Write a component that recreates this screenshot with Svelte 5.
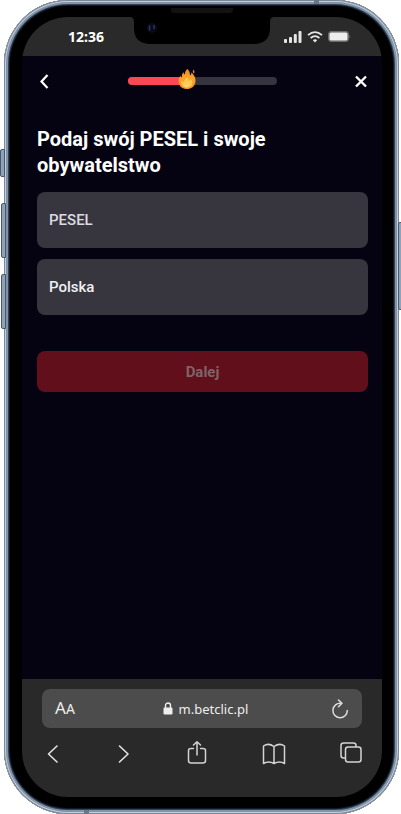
<script>
  let pesel = $state('');
  let country = $state('Polska');
  const progress = 40;
</script>

<svelte:head>
  <title>Betclic</title>
</svelte:head>

<div class="stage">
  <div class="phone">
    <span class="side mute"></span>
    <span class="side up"></span>
    <span class="side down"></span>
    <span class="side power"></span>
    <span class="speaker"></span>
    <span class="antenna top-right"></span>
    <span class="antenna bottom-left"></span>

    <div class="screen">
      <div class="status">
        <span class="time">12:36</span>
        <svg class="notch" width="144" height="28" viewBox="0 0 144 28">
          <path d="M0 0H144Q140 0 140 5V11Q140 27 123 27H21Q4 27 4 11V5Q4 0 0 0Z" fill="#000" />
          <circle cx="22" cy="11" r="5" fill="#0b0b14" />
          <path d="M19.500 9v4M24 8.500v3" stroke="#2b3270" stroke-width="1.500" stroke-linecap="round" />
        </svg>
        <div class="signals">
          <svg width="18" height="12" viewBox="0 0 18 12" fill="#e6e6e6">
            <rect x="0" y="8" width="3" height="4" rx="1" />
            <rect x="5" y="6" width="3" height="6" rx="1" />
            <rect x="9.800" y="3" width="3" height="9" rx="1" />
            <rect x="14.500" y="0" width="3" height="12" rx="1" />
          </svg>
          <svg width="16" height="12" viewBox="0 0 16 12" fill="none" stroke="#e6e6e6" stroke-width="1.800">
            <path d="M1 4.200Q8-2 15 4.200" />
            <path d="M3.600 7Q8 3.200 12.400 7" />
            <path d="M5.800 9.300Q8 7.300 10.200 9.300L8 11.600Z" fill="#e6e6e6" stroke="none" />
          </svg>
          <svg width="23" height="11" viewBox="0 0 23 11">
            <rect x="0.500" y="0.500" width="20" height="10" rx="2.500" fill="#5c5c5c" stroke="#6a6a6a" />
            <rect x="1.500" y="1.500" width="18" height="8" rx="1.500" fill="#ededed" />
            <path d="M21.500 3.500q1.500 2 0 4z" fill="#777" />
          </svg>
        </div>
      </div>

      <main>
        <header>
          <button class="icon" aria-label="Wstecz">
            <svg width="14" height="16" viewBox="0 0 14 16" fill="none" stroke="#fff" stroke-width="2.200">
              <path d="M10.500 2L4.500 8.500L10.500 15" />
            </svg>
          </button>
          <div class="progress" role="progressbar" aria-valuenow={progress} aria-valuemin="0" aria-valuemax="100" aria-label="Postęp">
            <div class="fill" style="width: {progress}%"></div>
            <svg class="flame" style="left: {progress}%" width="18" height="22" viewBox="0 0 18 22">
              <defs>
                <linearGradient id="fire" x1="0" y1="0" x2="0" y2="1">
                  <stop offset="0" stop-color="#f08a1c" />
                  <stop offset="0.500" stop-color="#fba62b" />
                  <stop offset="1" stop-color="#f58a25" />
                </linearGradient>
              </defs>
              <path d="M9.500 1C11.500 3 12 5 12 7.500C13.300 6.800 13.500 5.500 13.300 4.300C16 7 18 10 17.400 14C16.700 18.500 13.300 21 9 21C4.500 21 1 18.500.6 14C.4 11.500 1.300 9.500 2.600 7.500C2.700 9 3 9.700 3.800 10.200C3.900 8 4 6 5.200 4C5.500 5.400 6 6 7 6.500C6.800 4.300 7.600 2.300 9.500 1Z" fill="url(#fire)" />
              <path d="M15.200 1.500C16.700 3 17 4.600 15.800 5.600C14.600 4.500 14.700 2.800 15.200 1.500Z" fill="#e88a1d" />
              <path d="M9.600 9C10.500 10.500 10.300 11.500 10.600 13C12 12.500 12.600 11.800 12.800 10.800C14.500 13 15 15.500 13.500 17.800C11.500 20.300 6.500 20.400 4.500 17.900C3.100 16 3 14.200 3.800 12.600C4.500 13.600 5 14 6 14.100C6 12 7.500 10.700 9.600 9Z" fill="#fec94f" />
              <path d="M9.500 14C11.500 15.500 11.800 17 10.800 18.300C9.500 19.600 7.200 19.400 6.300 18.200C5.600 17.200 5.800 16.500 6.200 15.900C6.900 16.600 7.500 16.600 8 16.400C9 15.800 9.300 15 9.500 14Z" fill="#fed469" />
            </svg>
          </div>
          <button class="icon" aria-label="Zamknij">
            <svg width="14" height="16" viewBox="0 0 14 16" fill="none" stroke="#fff" stroke-width="2.400">
              <path d="M2 3.500L12 13.500M12 3.500L2 13.500" />
            </svg>
          </button>
        </header>

        <form onsubmit={(e) => e.preventDefault()}>
          <h1>Podaj swój PESEL i swoje obywatelstwo</h1>
          <input class="field" type="text" placeholder="PESEL" aria-label="PESEL" bind:value={pesel} />
          <select class="field" aria-label="Obywatelstwo" bind:value={country}>
            <option>Polska</option>
          </select>
          <button class="submit" disabled={!pesel}>Dalej</button>
        </form>
      </main>

      <footer>
        <div class="address">
          <button class="reader" aria-label="Widok strony">A<small>A</small></button>
          <a class="url" href="https://m.betclic.pl">
            <svg width="10" height="13" viewBox="0 0 10 13">
              <path d="M2.500 6V3.500a2.500 2.500 0 0 1 5 0V6" fill="none" stroke="#eee" stroke-width="1.400" />
              <rect x="0.500" y="5.500" width="9" height="7" rx="1.300" fill="#eee" />
            </svg>
            m.betclic.pl
          </a>
          <button class="icon" aria-label="Odśwież">
            <svg width="18" height="20" viewBox="0 0 18 20" fill="none" stroke="#ddd" stroke-width="1.500" stroke-linecap="round" stroke-linejoin="round">
              <path d="M10 4.300A7.200 7.200 0 1 0 16.300 11.500" />
              <path d="M7.500 1L11 4.300L7.500 7.800" />
            </svg>
          </button>
        </div>
        <nav>
          <button class="icon" aria-label="Poprzednia strona">
            <svg width="18" height="24" viewBox="0 0 18 24" fill="none" stroke="#e4e4e4" stroke-width="1.600" stroke-linecap="round" stroke-linejoin="round">
              <path d="M13 5L4.500 13L13 21" />
            </svg>
          </button>
          <button class="icon" aria-label="Następna strona">
            <svg width="22" height="24" viewBox="0 0 22 24" fill="none" stroke="#e4e4e4" stroke-width="1.600" stroke-linecap="round" stroke-linejoin="round">
              <path d="M6.500 5L15 13L6.500 21" />
            </svg>
          </button>
          <button class="icon" aria-label="Udostępnij">
            <svg width="22" height="24" viewBox="0 0 22 24" fill="none" stroke="#d4d4d4" stroke-width="1.500" stroke-linecap="round" stroke-linejoin="round">
              <path d="M7.500 7.500H5Q2.500 7.500 2.500 9.500V19.500Q2.500 22 5 22H17Q19.500 22 19.500 19.500V9.500Q19.500 7.500 17 7.500H14.500" />
              <path d="M11 14V1M7.500 4L11 .8L14.500 4" />
            </svg>
          </button>
          <button class="icon wide" aria-label="Zakładki">
            <svg width="24" height="24" viewBox="0 0 24 24" fill="none" stroke="#d4d4d4" stroke-width="1.500" stroke-linejoin="round">
              <path d="M12 5.500Q6.500 1.500 1.500 5V22.500Q6.500 19.500 12 22.500Q17.500 19.500 22.500 22.500V5Q17.500 1.500 12 5.500ZM12 5.500V22.500" />
            </svg>
          </button>
          <button class="icon" aria-label="Karty">
            <svg width="22" height="24" viewBox="0 0 22 24" fill="none" stroke="#d4d4d4" stroke-width="1.500" stroke-linejoin="round">
              <rect x="5.500" y="6" width="15.500" height="15" rx="2.500" />
              <path d="M5.500 17H3.500Q1 17 1 14.500V4.500Q1 2 3.500 2H13.500Q16 2 16 4.500V6" />
            </svg>
          </button>
        </nav>
      </footer>
    </div>
  </div>
</div>

<style>
  :global(body) {
    margin: 0;
    background: #fff;
  }

  * {
    box-sizing: border-box;
  }

  button,
  input,
  select {
    margin: 0;
    border: 0;
    font: inherit;
    color: inherit;
  }

  svg {
    display: block;
  }

  .stage {
    padding: 0 2px 0 4px;
    overflow: hidden;
    font-family: Roboto, 'Liberation Sans', sans-serif;
  }

  .phone {
    position: relative;
    display: flex;
    min-height: 100vh;
    padding: 17px 17px 17px 18px;
    border-radius: 64px;
    background: #000;
    box-shadow:
      inset 0 0 0 1px #7c8794,
      inset 0 0 0 2px #c3cedb,
      inset 0 0 0 4px #8093a9,
      inset 0 0 0 5px #33445a,
      inset 0 0 0 6px #101823;
  }

  .screen {
    position: relative;
    display: flex;
    flex: 1;
    flex-direction: column;
    overflow: hidden;
    border-radius: 46px;
    background: #050312;
  }

  .side {
    position: absolute;
    left: -4px;
    width: 5px;
    border: 1px solid #49586b;
    border-radius: 2px 0 0 2px;
    background: #8fa2b8;
  }

  .mute {
    top: 149px;
    height: 28px;
  }

  .up {
    top: 203px;
    left: -3px;
    height: 55px;
  }

  .down {
    top: 274px;
    left: -3px;
    height: 55px;
  }

  .power {
    top: 222px;
    right: -3px;
    left: auto;
    width: 4px;
    height: 88px;
  }

  .speaker {
    position: absolute;
    top: 8px;
    left: 50%;
    width: 62px;
    height: 5px;
    margin-left: -31px;
    border-radius: 0 0 3px 3px;
    background: #121212;
  }

  .antenna {
    position: absolute;
    width: 5px;
    height: 4px;
    background: #66778c;
  }

  .top-right {
    top: 0;
    right: 80px;
  }

  .bottom-left {
    bottom: 0;
    left: 80px;
  }

  .status {
    position: relative;
    display: flex;
    justify-content: space-between;
    align-items: center;
    height: 39px;
    padding: 0 31px 0 46px;
    background: #2a2a2a;
  }

  .time {
    color: #fff;
    font: 700 14px/20px 'Noto Sans', sans-serif;
  }

  .notch {
    position: absolute;
    top: 0;
    left: 50%;
    margin-left: -72px;
  }

  .signals {
    display: flex;
    align-items: center;
    gap: 5px;
  }

  main {
    flex: 1;
    padding: 0 14px 0 15px;
  }

  header {
    display: flex;
    justify-content: space-between;
    align-items: center;
    height: 50px;
  }

  .icon {
    padding: 0;
    background: none;
    cursor: pointer;
  }

  .progress {
    position: relative;
    width: 45%;
    height: 8px;
    border-radius: 4px;
    background: #35343f;
  }

  .fill {
    height: 100%;
    border-radius: 4px 0 0 4px;
    background: #fc4754;
  }

  .flame {
    position: absolute;
    top: -9px;
    margin-left: -10px;
  }

  form {
    display: flex;
    flex-direction: column;
    gap: 11px;
    padding-top: 20px;
  }

  h1 {
    margin: 0 0 3px;
    color: #fff;
    font-size: 20px;
    font-weight: 700;
    line-height: 26px;
  }

  .field {
    width: 100%;
    height: 56px;
    padding: 0 12px;
    border-radius: 8px;
    background: #37363f;
    color: #f0f0f2;
    font-size: 15px;
    font-weight: 500;
    appearance: none;
  }

  .field::placeholder {
    color: #dcdce0;
    opacity: 1;
  }

  .submit {
    height: 41px;
    margin-top: 25px;
    border-radius: 8px;
    background: #d01f2c;
    color: #fff;
    font-size: 15px;
    font-weight: 700;
  }

  .submit:disabled {
    background: #610f1b;
    color: #7d6468;
  }

  footer {
    height: 118px;
    padding: 10px 20px 0;
    background: #292929;
  }

  .address {
    display: flex;
    justify-content: space-between;
    align-items: center;
    height: 39px;
    padding: 0 13px;
    border-radius: 8px;
    background: #4c4c4c;
    color: #eee;
  }

  .reader {
    padding: 0;
    background: none;
    font: 17px/20px 'Noto Sans', sans-serif;
  }

  .reader small {
    font-size: 14px;
  }

  .url {
    display: flex;
    align-items: center;
    gap: 6px;
    padding-left: 5px;
    color: inherit;
    font: 13px/20px 'Noto Sans', sans-serif;
    text-decoration: none;
  }

  nav {
    display: flex;
    justify-content: space-between;
    padding: 13px 0 0 2px;
  }

  .wide {
    padding: 0 3px;
  }
</style>
